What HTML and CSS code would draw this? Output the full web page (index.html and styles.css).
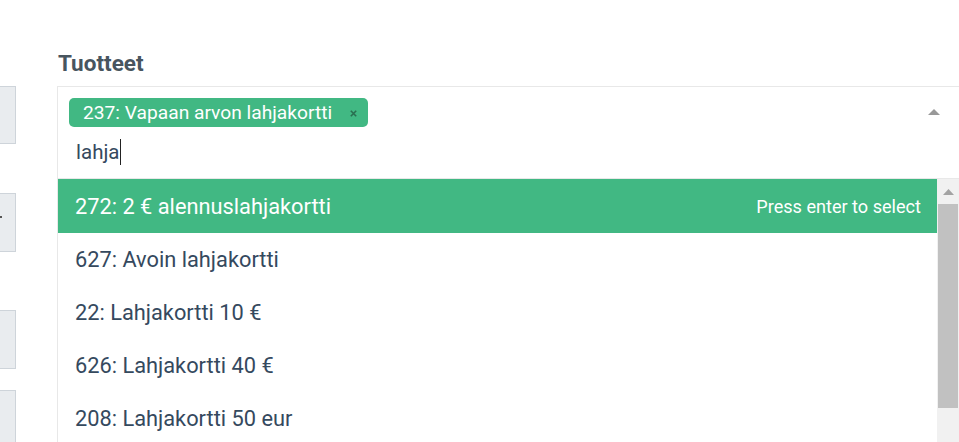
FILE: index.html
```html
<!DOCTYPE html>
<html lang="fi">
<head>
<meta charset="utf-8">
<title>Tuotteet</title>
<link rel="stylesheet" href="styles.css">
</head>
<body>
<div class="page">
  <div class="side">
    <div class="side-box b1"></div>
    <div class="side-box b2"><span class="dot"></span></div>
    <div class="side-box b3"></div>
    <div class="side-box b4"></div>
  </div>
  <div class="main">
    <div class="label">Tuotteet</div>
    <div class="select">
      <div class="tags">
        <span class="tag">237: Vapaan arvon lahjakortti<svg class="tag-x" width="7" height="7" viewBox="0 0 7 7"><path d="M0.8 0.8 L6.2 6.2 M6.2 0.8 L0.8 6.2" stroke="#2a6e50" stroke-width="1.6"/></svg></span>
        <div class="input">lahja<span class="caret-line"></span></div>
      </div>
      <svg class="arrow" width="12" height="6" viewBox="0 0 12 6"><path d="M0 6 L6 0 L12 6 Z" fill="#999"/></svg>
    </div>
    <div class="dropdown">
      <ul class="options">
        <li class="option active"><span>272: 2 € alennuslahjakortti</span><span class="hint">Press enter to select</span></li>
        <li class="option"><span>627: Avoin lahjakortti</span></li>
        <li class="option"><span>22: Lahjakortti 10 €</span></li>
        <li class="option"><span>626: Lahjakortti 40 €</span></li>
        <li class="option"><span>208: Lahjakortti 50 eur</span></li>
      </ul>
      <div class="scrollbar">
        <svg class="sb-up" width="11" height="6" viewBox="0 0 11 6"><path d="M0 6 L5.5 0 L11 6 Z" fill="#a3a3a3"/></svg>
        <div class="thumb"></div>
      </div>
    </div>
  </div>
</div>
</body>
</html>
```
FILE: styles.css
```css
html, body {
  margin: 0;
  padding: 0;
  background: #fff;
  overflow: hidden;
  width: 959px;
  height: 442px;
}
.page {
  display: flex;
  font-family: Roboto, "Open Sans", sans-serif;
  color: #35495e;
}
.side {
  width: 17px;
  flex: none;
  display: flex;
  flex-direction: column;
  padding-top: 86px;
}
.side-box {
  width: 16px;
  height: 58px;
  box-sizing: border-box;
  background: #e9ecef;
  border: 1px solid #ced4da;
  border-left: none;
  position: relative;
}
.b2 { margin-top: 49px; height: 59px; }
.b3 { margin-top: 58px; height: 59px; }
.b4 { margin-top: 21px; height: 60px; }
.dot {
  position: absolute;
  left: 0;
  top: 22px;
  width: 2px;
  height: 2px;
  background: #555;
}
.main {
  margin-left: 40px;
  width: 920px;
  flex: none;
}
.label {
  font-weight: 700;
  font-size: 22.5px;
  line-height: 24px;
  color: #48555f;
  padding-top: 51px;
  height: 86px;
  box-sizing: border-box;
  padding-left: 1px;
}
.select {
  border: 1px solid #e8e8e8;
  border-bottom: none;
  height: 92px;
  box-sizing: border-box;
  position: relative;
  padding: 11px 40px 0 11px;
}
.tags {
  display: flex;
  flex-direction: column;
  align-items: flex-start;
}
.tag {
  display: inline-flex;
  align-items: center;
  height: 29px;
  background: #41b883;
  color: #fff;
  border-radius: 5px;
  font-size: 19.2px;
  padding: 0 11px 0 14px;
  box-sizing: border-box;
  white-space: nowrap;
}
.tag-x {
  margin-left: 18px;
  margin-top: 2px;
}
.input {
  margin-top: 12px;
  margin-left: 7px;
  font-size: 20.5px;
  line-height: 26px;
  display: flex;
  align-items: center;
}
.caret-line {
  display: inline-block;
  width: 1px;
  height: 26px;
  background: #222;
  margin-left: 1px;
}
.arrow {
  position: absolute;
  right: 36px;
  top: 22px;
}
.dropdown {
  display: flex;
  border-left: 1px solid #e8e8e8;
  border-top: 1px solid #e8e8e8;
  height: 264px;
}
.options {
  list-style: none;
  margin: 0;
  padding: 0;
  width: 879px;
  flex: none;
}
.option {
  height: 53px;
  display: flex;
  align-items: center;
  justify-content: space-between;
  padding: 0 16px 0 17px;
  font-size: 21.8px;
  white-space: nowrap;
}
.option.active {
  background: #41b883;
  color: #fff;
  height: 54px;
}
.hint {
  font-size: 18.1px;
}
.scrollbar {
  width: 22px;
  flex: none;
  background: #f1f1f1;
  display: flex;
  flex-direction: column;
  align-items: center;
}
.sb-up {
  margin-top: 10px;
}
.thumb {
  margin-top: 9px;
  width: 20px;
  height: 204px;
  background: #c1c1c1;
}
```
